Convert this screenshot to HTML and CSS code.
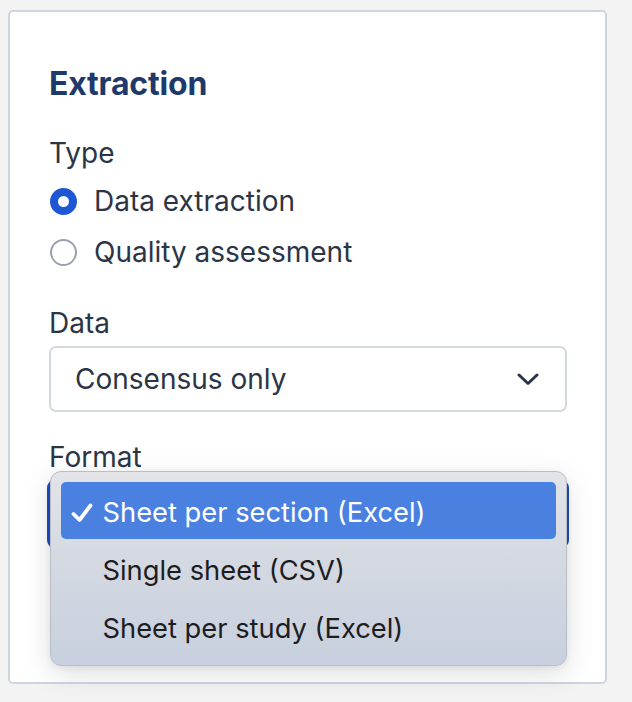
FILE: index.html
```html
<!DOCTYPE html>
<html lang="en">
<head>
<meta charset="utf-8">
<title>Extraction</title>
<link rel="stylesheet" href="styles.css">
</head>
<body>
<section class="card">
  <h2 class="card-title">Extraction</h2>

  <div class="field-label">Type</div>
  <div class="radio-group">
    <label class="radio-row">
      <span class="radio radio-checked"></span>
      <span class="radio-text">Data extraction</span>
    </label>
    <label class="radio-row">
      <span class="radio"></span>
      <span class="radio-text">Quality assessment</span>
    </label>
  </div>

  <div class="field-label field-gap">Data</div>
  <div class="select">
    <span class="select-value">Consensus only</span>
    <svg class="chevron" width="22" height="13" viewBox="0 0 22 13" aria-hidden="true">
      <polyline points="2,2 11,10.5 20,2" fill="none" stroke="#2b3545" stroke-width="3" stroke-linecap="round" stroke-linejoin="round"/>
    </svg>
  </div>

  <div class="field-label field-gap-sm">Format</div>
  <div class="select-wrap">
    <div class="select select-focused"></div>
    <ul class="menu">
      <li class="menu-item menu-item-active">
        <span class="menu-check">
          <svg width="22" height="20" viewBox="0 0 22 20" aria-hidden="true">
            <polyline points="2.5,11 8.5,17 19.5,2.5" fill="none" stroke="#ffffff" stroke-width="3.8" stroke-linecap="round" stroke-linejoin="round"/>
          </svg>
        </span>
        <span>Sheet per section (Excel)</span>
      </li>
      <li class="menu-item">
        <span class="menu-check"></span>
        <span>Single sheet (CSV)</span>
      </li>
      <li class="menu-item">
        <span class="menu-check"></span>
        <span>Sheet per study (Excel)</span>
      </li>
    </ul>
  </div>
</section>
</body>
</html>
```

FILE: styles.css
```css
* { box-sizing: border-box; }

html, body {
  margin: 0;
  padding: 0;
  background: #f3f3f3;
}

body {
  font-family: "Inter", "Noto Sans", sans-serif;
  color: #2b3545;
  padding: 10px 25px 18px 8px;
}

.card {
  width: 599px;
  background: #ffffff;
  border: 2px solid #cfd5e0;
  border-radius: 5px;
  padding: 52px 38px 135px 39px;
}

.card-title {
  margin: 0;
  font-size: 32px;
  line-height: 40px;
  font-weight: 700;
  color: #1f396b;
  letter-spacing: -0.2px;
}

.field-label {
  margin-top: 32px;
  font-size: 28px;
  line-height: 34px;
  color: #2b3545;
}

.field-gap { margin-top: 37px; }
.field-gap-sm { margin-top: 28px; }

.radio-group {
  margin-top: 14px;
  display: flex;
  flex-direction: column;
  gap: 17px;
}

.radio-row {
  display: flex;
  align-items: center;
  gap: 17px;
  height: 34px;
  font-size: 28px;
  line-height: 34px;
}

.radio {
  width: 27px;
  height: 27px;
  margin-left: 1px;
  border-radius: 50%;
  border: 2px solid #9aa1ae;
  background: #ffffff;
  flex: none;
}

.radio-checked {
  border: 8.5px solid #1f56d4;
  background: #ffffff;
}

.select-wrap {
  position: relative;
  margin-top: 7px;
}

.select {
  margin-top: 6px;
  height: 66px;
  border: 2px solid #d3d8e1;
  border-radius: 7px;
  background: #ffffff;
  display: flex;
  align-items: center;
  justify-content: space-between;
  padding: 0 26px 0 24px;
  font-size: 28px;
  line-height: 62px;
  color: #2b3545;
}

.select-wrap .select { margin-top: 0; }

.select-focused {
  border-color: #1e4cc4;
  box-shadow: 0 0 0 2px #1e4cc4;
}

.chevron { flex: none; }

.menu {
  position: absolute;
  top: -10px;
  left: 0.5px;
  width: 517px;
  margin: 0;
  padding: 10px 10px 9px 10px;
  list-style: none;
  border: 1px solid #b9bdc5;
  border-radius: 11px;
  background: linear-gradient(to bottom, #e2e4e8 0%, #d3d8e1 50%, #c8d0df 100%);
  box-shadow: 0 8px 28px rgba(0, 0, 0, 0.13), 0 2px 6px rgba(0, 0, 0, 0.06);
  font-family: "Inter", "Noto Sans", sans-serif;
  font-size: 27.3px;
  color: #1d1d1f;
}

.menu-item {
  display: flex;
  align-items: center;
  height: 58px;
  line-height: 52px;
  padding: 4px 0 0 10px;
  border-radius: 5px;
  gap: 10px;
}

.menu-item-active {
  background: #4a81e0;
  color: #ffffff;
  height: 57px;
  margin-bottom: 1px;
}

.menu-check {
  width: 22px;
  height: 20px;
  flex: none;
  display: flex;
}
```
